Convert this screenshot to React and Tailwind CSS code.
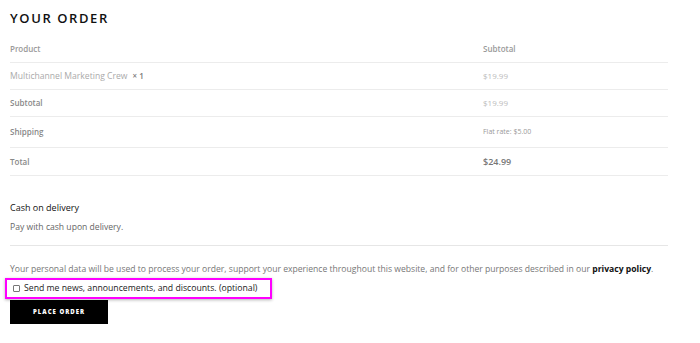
export default function App() {
  const rows = [
    { label: 'Multichannel Marketing Crew', qty: '× 1', value: '$19.99', h: 'h-[27px]', light: true },
    { label: 'Subtotal', value: '$19.99', h: 'h-[27px]' },
    { label: 'Shipping', value: 'Flat rate: $5.00', h: 'h-[31px]', small: true },
    { label: 'Total', value: '$24.99', h: 'h-[28px]', strong: true },
  ];

  return (
    <div className="w-[700px] h-[343px] bg-white overflow-hidden" style={{ fontFamily: '"Open Sans", "Liberation Sans", sans-serif' }}>
      <div className="pl-[10px] w-[668px]">
        <h2 className="pt-[10px] text-[13px] leading-[16px] font-semibold tracking-[1.6px] text-[#111]">YOUR ORDER</h2>

        <div className="mt-[9px]">
          <div className="flex items-center h-[28px] border-b border-[#ececec] text-[8px] font-semibold text-[#999]">
            <div className="flex-1">Product</div>
            <div className="w-[185px]">Subtotal</div>
          </div>
          {rows.map((row) => (
            <div key={row.label} className={`flex items-center ${row.h} border-b border-[#ececec] text-[8px]`}>
              <div className={`flex-1 ${row.light ? 'text-[#aaa] text-[8.6px]' : 'font-semibold text-[#888]'}`}>
                {row.label}
                {row.qty && <span className="ml-[5px] text-[#777] font-semibold text-[8px]">{row.qty}</span>}
              </div>
              <div
                className={`w-[185px] ${
                  row.strong ? 'font-semibold text-[#777] text-[9px]' : row.small ? 'text-[#999] text-[7px]' : 'text-[#bbb]'
                }`}
              >
                {row.value}
              </div>
            </div>
          ))}
        </div>

        <div className="mt-[25px] text-[9px] text-[#111] leading-[14px]">Cash on delivery</div>
        <div className="mt-[5px] text-[8.6px] text-[#666] leading-[14px]">Pay with cash upon delivery.</div>
        <div className="mt-[11px] border-b border-[#e6e6e6]" />

        <p className="mt-[17px] text-[8.6px] leading-[12px] text-[#777] whitespace-nowrap">
          Your personal data will be used to process your order, support your experience throughout this website, and for other purposes described in our{' '}
          <span className="font-bold text-[#111]">privacy policy</span>.
        </p>
      </div>

      <div className="ml-[5px] mt-[3px] w-[267px] h-[21px] border-2 border-[#ff00ff] shadow-[0_1px_3px_rgba(0,0,0,0.3)] flex items-center pl-[6px] gap-[4px]">
        <span className="w-[7px] h-[7px] border border-[#777] rounded-[1px] bg-white" />
        <span className="text-[8.7px] text-[#222]">Send me news, announcements, and discounts. (optional)</span>
      </div>

      <div className="ml-[10px] mt-[1px] w-[98px] h-[24px] bg-black flex items-center justify-center">
        <span className="text-[6px] font-extrabold tracking-[1px] text-white">PLACE ORDER</span>
      </div>
    </div>
  );
}
